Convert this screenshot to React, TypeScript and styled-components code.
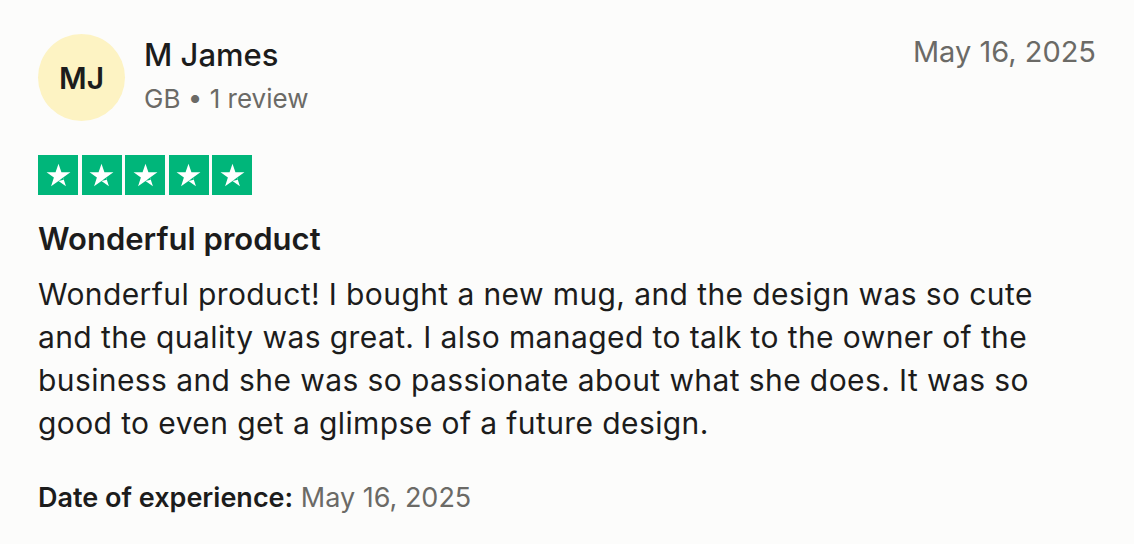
import styled, { createGlobalStyle } from "styled-components";

const GlobalStyle = createGlobalStyle`
  body {
    margin: 0;
    background: #fcfcfb;
    font-family: Inter, "Liberation Sans", sans-serif;
  }
`;

const Card = styled.div`
  width: 1134px;
  height: 544px;
  box-sizing: border-box;
  padding: 34px 38px 0 38px;
  background: #fcfcfb;
  color: #1c1c1c;
`;

const Header = styled.div`
  display: flex;
  align-items: flex-start;
  justify-content: space-between;
`;

const Consumer = styled.div`
  display: flex;
  align-items: flex-start;
  gap: 19px;
`;

const Avatar = styled.div`
  width: 87px;
  height: 87px;
  border-radius: 50%;
  background: #fdf3c3;
  display: flex;
  align-items: center;
  justify-content: center;
  font-size: 30px;
  font-weight: 600;
  color: #1c1c1c;
`;

const Name = styled.div`
  margin-top: 3px;
  font-size: 31px;
  font-weight: 500;
  line-height: 36px;
`;

const Meta = styled.div`
  margin-top: 8px;
  font-size: 26px;
  color: #6b6a66;
  line-height: 36px;
`;

const DateText = styled.div`
  font-size: 29px;
  color: #6b6a66;
  line-height: 36px;
`;

const Stars = styled.div`
  display: flex;
  gap: 3.5px;
  margin-top: 34px;
`;

const StarBox = styled.div`
  width: 40px;
  height: 40px;
  background: #00b67a;
  display: flex;
  align-items: center;
  justify-content: center;
`;

const Title = styled.h2`
  margin: 24px 0 0;
  font-size: 31px;
  font-weight: 600;
  line-height: 40px;
`;

const Body = styled.p`
  margin: 14px 0 0;
  max-width: 1030px;
  font-size: 30px;
  line-height: 43px;
  letter-spacing: 0.4px;
  font-weight: 400;
`;

const Experience = styled.p`
  margin: 35px 0 0;
  font-size: 27px;
  line-height: 36px;
  color: #6b6a66;
  b {
    color: #1c1c1c;
    font-weight: 600;
  }
`;

// trustpilot-style star, white with a faint fold on the lower right
const Star = () => (
  <svg width="27" height="27" viewBox="0 0 24 24">
    <path
      d="M12 1.5l2.6 7.6h8l-6.5 4.7 2.5 7.7L12 16.8l-6.6 4.7 2.5-7.7L1.4 9.1h8z"
      fill="#fff"
    />
    <path d="M16.1 13.8l0.6 2L12 16.8z" fill="#00b67a" />
  </svg>
);

const App = () => {
  return (
    <Card>
      <GlobalStyle />
      <Header>
        <Consumer>
          <Avatar>MJ</Avatar>
          <div>
            <Name>M James</Name>
            <Meta>GB • 1 review</Meta>
          </div>
        </Consumer>
        <DateText>May 16, 2025</DateText>
      </Header>
      <Stars>
        {[0, 1, 2, 3, 4].map((i) => (
          <StarBox key={i}>
            <Star />
          </StarBox>
        ))}
      </Stars>
      <Title>Wonderful product</Title>
      <Body>
        Wonderful product! I bought a new mug, and the design was so cute and the quality was
        great. I also managed to talk to the owner of the business and she was so passionate
        about what she does. It was so good to even get a glimpse of a future design.
      </Body>
      <Experience>
        <b>Date of experience:</b> May 16, 2025
      </Experience>
    </Card>
  );
};

export default App;
